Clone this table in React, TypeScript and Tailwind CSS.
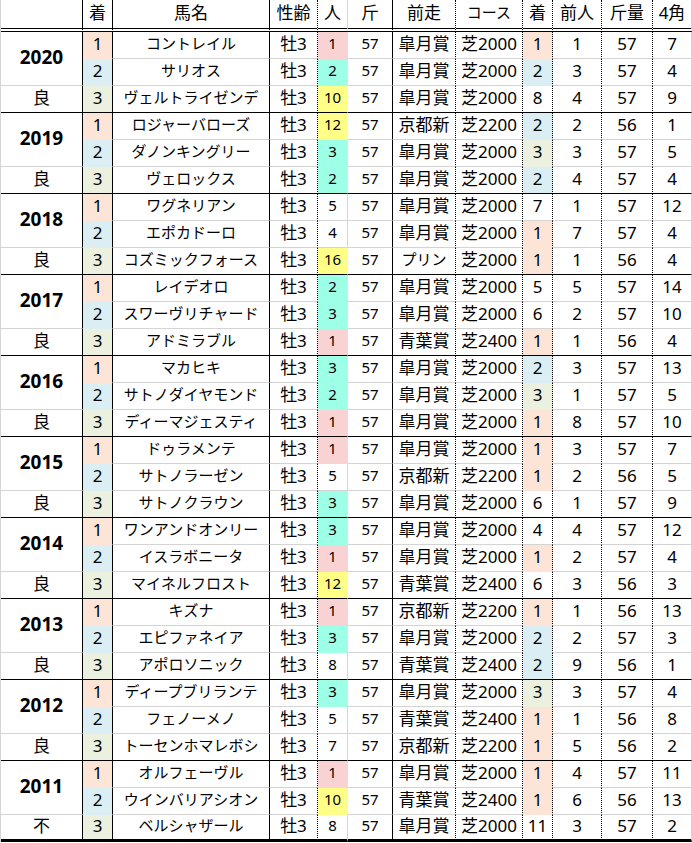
import React from "react";

type Fill = "peach" | "blue" | "green" | "pink" | "aqua" | "yellow" | null;

const FILL: Record<string, { bg: string; b: string; r: string }> = {
  peach: { bg: "bg-[#fce4d6]", b: "border-b-[#fce4d6]", r: "border-r-[#fce4d6]" },
  blue: { bg: "bg-[#daeef3]", b: "border-b-[#daeef3]", r: "border-r-[#daeef3]" },
  green: { bg: "bg-[#ebf1de]", b: "border-b-[#ebf1de]", r: "border-r-[#ebf1de]" },
  pink: { bg: "bg-[#f9d3d3]", b: "border-b-[#f9d3d3]", r: "border-r-[#f9d3d3]" },
  aqua: { bg: "bg-[#9cffe6]", b: "border-b-[#9cffe6]", r: "border-r-[#9cffe6]" },
  yellow: { bg: "bg-[#ffff88]", b: "border-b-[#ffff88]", r: "border-r-[#ffff88]" },
};

const RIGHT = [
  "border-r-black",
  "border-r-black",
  "border-r-black",
  "border-r-black [border-right-style:dotted]",
  "border-r-[#d4d4d4]",
  "border-r-black",
  "border-r-black [border-right-style:dotted]",
  "border-r-black [border-right-style:dotted]",
  "border-r-black [border-right-style:dotted]",
  "border-r-black [border-right-style:dotted]",
  "border-r-black [border-right-style:dotted]",
  "border-r-[#d4d4d4]",
];

const GREY_RIGHT = [4, 11];

type Row = [number, string, string, number, number, string, string, number, number, number, number];

const groups: { year: string; cond: string; rows: Row[] }[] = [
  {
    year: "2020",
    cond: "良",
    rows: [
      [1, "コントレイル", "牡3", 1, 57, "皐月賞", "芝2000", 1, 1, 57, 7],
      [2, "サリオス", "牡3", 2, 57, "皐月賞", "芝2000", 2, 3, 57, 4],
      [3, "ヴェルトライゼンデ", "牡3", 10, 57, "皐月賞", "芝2000", 8, 4, 57, 9],
    ],
  },
  {
    year: "2019",
    cond: "良",
    rows: [
      [1, "ロジャーバローズ", "牡3", 12, 57, "京都新", "芝2200", 2, 2, 56, 1],
      [2, "ダノンキングリー", "牡3", 3, 57, "皐月賞", "芝2000", 3, 3, 57, 5],
      [3, "ヴェロックス", "牡3", 2, 57, "皐月賞", "芝2000", 2, 4, 57, 4],
    ],
  },
  {
    year: "2018",
    cond: "良",
    rows: [
      [1, "ワグネリアン", "牡3", 5, 57, "皐月賞", "芝2000", 7, 1, 57, 12],
      [2, "エポカドーロ", "牡3", 4, 57, "皐月賞", "芝2000", 1, 7, 57, 4],
      [3, "コズミックフォース", "牡3", 16, 57, "プリン", "芝2000", 1, 1, 56, 4],
    ],
  },
  {
    year: "2017",
    cond: "良",
    rows: [
      [1, "レイデオロ", "牡3", 2, 57, "皐月賞", "芝2000", 5, 5, 57, 14],
      [2, "スワーヴリチャード", "牡3", 3, 57, "皐月賞", "芝2000", 6, 2, 57, 10],
      [3, "アドミラブル", "牡3", 1, 57, "青葉賞", "芝2400", 1, 1, 56, 4],
    ],
  },
  {
    year: "2016",
    cond: "良",
    rows: [
      [1, "マカヒキ", "牡3", 3, 57, "皐月賞", "芝2000", 2, 3, 57, 13],
      [2, "サトノダイヤモンド", "牡3", 2, 57, "皐月賞", "芝2000", 3, 1, 57, 5],
      [3, "ディーマジェスティ", "牡3", 1, 57, "皐月賞", "芝2000", 1, 8, 57, 10],
    ],
  },
  {
    year: "2015",
    cond: "良",
    rows: [
      [1, "ドゥラメンテ", "牡3", 1, 57, "皐月賞", "芝2000", 1, 3, 57, 7],
      [2, "サトノラーゼン", "牡3", 5, 57, "京都新", "芝2200", 1, 2, 56, 5],
      [3, "サトノクラウン", "牡3", 3, 57, "皐月賞", "芝2000", 6, 1, 57, 9],
    ],
  },
  {
    year: "2014",
    cond: "良",
    rows: [
      [1, "ワンアンドオンリー", "牡3", 3, 57, "皐月賞", "芝2000", 4, 4, 57, 12],
      [2, "イスラボニータ", "牡3", 1, 57, "皐月賞", "芝2000", 1, 2, 57, 4],
      [3, "マイネルフロスト", "牡3", 12, 57, "青葉賞", "芝2400", 6, 3, 56, 3],
    ],
  },
  {
    year: "2013",
    cond: "良",
    rows: [
      [1, "キズナ", "牡3", 1, 57, "京都新", "芝2200", 1, 1, 56, 13],
      [2, "エピファネイア", "牡3", 3, 57, "皐月賞", "芝2000", 2, 2, 57, 3],
      [3, "アポロソニック", "牡3", 8, 57, "青葉賞", "芝2400", 2, 9, 56, 1],
    ],
  },
  {
    year: "2012",
    cond: "良",
    rows: [
      [1, "ディープブリランテ", "牡3", 3, 57, "皐月賞", "芝2000", 3, 3, 57, 4],
      [2, "フェノーメノ", "牡3", 5, 57, "青葉賞", "芝2400", 1, 1, 56, 8],
      [3, "トーセンホマレボシ", "牡3", 7, 57, "京都新", "芝2200", 1, 5, 56, 2],
    ],
  },
  {
    year: "2011",
    cond: "不",
    rows: [
      [1, "オルフェーヴル", "牡3", 1, 57, "皐月賞", "芝2000", 1, 4, 57, 11],
      [2, "ウインバリアシオン", "牡3", 10, 57, "青葉賞", "芝2400", 1, 6, 56, 13],
      [3, "ベルシャザール", "牡3", 8, 57, "皐月賞", "芝2000", 11, 3, 57, 2],
    ],
  },
];

function rankFill(n: number): Fill {
  if (n === 1) return "peach";
  if (n === 2) return "blue";
  if (n === 3) return "green";
  return null;
}

function popFill(n: number): Fill {
  if (n === 1) return "pink";
  if (n === 2 || n === 3) return "aqua";
  if (n >= 10) return "yellow";
  return null;
}

function Cell({
  col,
  pos,
  last,
  fill,
  size,
  children,
}: {
  col: number;
  pos: number;
  last: boolean;
  fill: Fill;
  size: string;
  children: React.ReactNode;
}) {
  const f = fill ? FILL[fill] : null;
  const right = f && GREY_RIGHT.includes(col) ? f.r : RIGHT[col];
  let bottom: string;
  if (pos === 2) bottom = last ? "border-b-[3px] border-b-black" : "border-b border-b-black";
  else bottom = "border-b " + (f ? f.b : "border-b-[#d4d4d4]");
  return (
    <div
      className={`h-[27px] flex items-center justify-center border-r leading-none whitespace-nowrap pb-[3px] ${right} ${bottom} ${
        f ? f.bg : ""
      } ${size}`}
    >
      {children}
    </div>
  );
}

const headers = ["", "着", "馬名", "性齢", "人", "斤", "前走", "コース", "着", "前人", "斤量", "4角"];

export default function App() {
  return (
    <div className="w-[692px] h-[843px] bg-white text-black font-['Noto_Sans','Noto_Sans_CJK_JP',sans-serif]">
      <div className="grid grid-cols-[82px_30px_157px_48px_30px_45px_63px_67px_30px_49px_51px_39px] border-l border-l-[#d4d4d4] w-[692px]">
        {headers.map((h, i) => (
          <div
            key={"h" + i}
            className={`h-[32px] flex items-center justify-center border-r border-b-4 border-b-black [border-bottom-style:double] leading-none pb-[4px] whitespace-nowrap ${RIGHT[i]} ${
              h === "コース" ? "text-[15px]" : "text-[17px]"
            }`}
          >
            {h}
          </div>
        ))}
        {groups.map((g, gi) => {
          const last = gi === groups.length - 1;
          return (
            <React.Fragment key={g.year}>
              {g.rows.map((r, ri) => {
                const cells: React.ReactNode[] = [];
                if (ri === 0) {
                  cells.push(
                    <div
                      key="y"
                      className="row-span-2 h-[54px] flex items-center justify-center border-r border-r-black border-b border-b-[#d4d4d4] text-[19px] font-bold leading-none pb-[3px]"
                    >
                      {g.year}
                    </div>
                  );
                } else if (ri === 2) {
                  cells.push(
                    <Cell key="c" col={0} pos={2} last={last} fill={null} size="text-[17px]">
                      {g.cond}
                    </Cell>
                  );
                }
                const vals: [React.ReactNode, Fill, string][] = [
                  [r[0], rankFill(r[0]), "text-[17px]"],
                  [r[1], null, "text-[15px]"],
                  [r[2], null, "text-[17px]"],
                  [r[3], popFill(r[3]), "text-[15px]"],
                  [r[4], null, "text-[15px]"],
                  [r[5], null, r[5] === "プリン" ? "text-[15px]" : "text-[17px]"],
                  [r[6], null, "text-[17px]"],
                  [r[7], rankFill(r[7]), "text-[17px]"],
                  [r[8], null, "text-[17px]"],
                  [r[9], null, "text-[17px]"],
                  [r[10], null, "text-[17px]"],
                ];
                vals.forEach(([v, f, s], ci) => {
                  cells.push(
                    <Cell key={ci} col={ci + 1} pos={ri} last={last} fill={f} size={s}>
                      {v}
                    </Cell>
                  );
                });
                return <React.Fragment key={ri}>{cells}</React.Fragment>;
              })}
            </React.Fragment>
          );
        })}
      </div>
    </div>
  );
}
